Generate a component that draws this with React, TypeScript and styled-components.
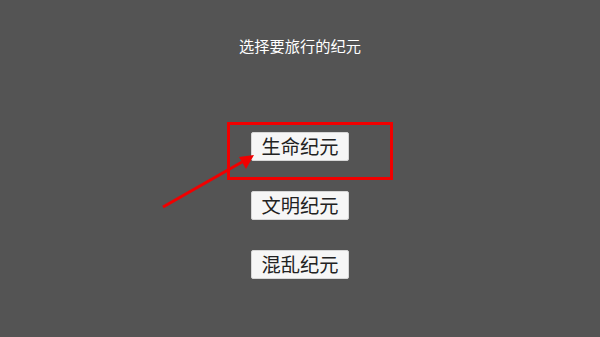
import React from "react";
import styled, { createGlobalStyle } from "styled-components";

const GlobalStyle = createGlobalStyle`
  html, body {
    margin: 0;
    padding: 0;
    background: #545454;
  }
  body {
    font-family: "Noto Sans CJK SC", "Noto Sans", sans-serif;
  }
`;

const Screen = styled.div`
  position: relative;
  width: 600px;
  height: 337px;
  box-sizing: border-box;
  padding-top: 35px;
  display: flex;
  flex-direction: column;
  align-items: center;
  background: #545454;
  overflow: hidden;
`;

const Title = styled.div`
  height: 20px;
  line-height: 20px;
  font-size: 15.25px;
  color: #ffffff;
  margin-bottom: 77px;
`;

const EraList = styled.div`
  display: flex;
  flex-direction: column;
  align-items: center;
  gap: 30px;
`;

const EraButton = styled.button`
  width: 98px;
  height: 29px;
  padding: 0;
  box-sizing: border-box;
  border: 1px solid #d6d6d6;
  border-radius: 2px;
  background: #f6f6f6;
  color: #222222;
  font-family: "Noto Sans CJK SC", "Noto Sans", sans-serif;
  font-size: 19.25px;
  line-height: 27px;
  cursor: pointer;
`;

const Highlight = styled.div`
  position: absolute;
  left: 227px;
  top: 122px;
  width: 166px;
  height: 58px;
  box-sizing: border-box;
  border: 3px solid #f00000;
  pointer-events: none;
`;

const Overlay = styled.svg`
  position: absolute;
  left: 0;
  top: 0;
  pointer-events: none;
`;

const eras = ["生命纪元", "文明纪元", "混乱纪元"];

export default function App() {
  return (
    <>
      <GlobalStyle />
      <Screen>
        <Title>选择要旅行的纪元</Title>
        <EraList>
          {eras.map((era) => (
            <EraButton key={era}>{era}</EraButton>
          ))}
        </EraList>
        <Highlight />
        <Overlay width={600} height={337}>
          <line x1={163} y1={207} x2={242} y2={162} stroke="#f00000" strokeWidth={3} />
          <polygon points="254,155 239,157 246,169" fill="#f00000" />
        </Overlay>
      </Screen>
    </>
  );
}
